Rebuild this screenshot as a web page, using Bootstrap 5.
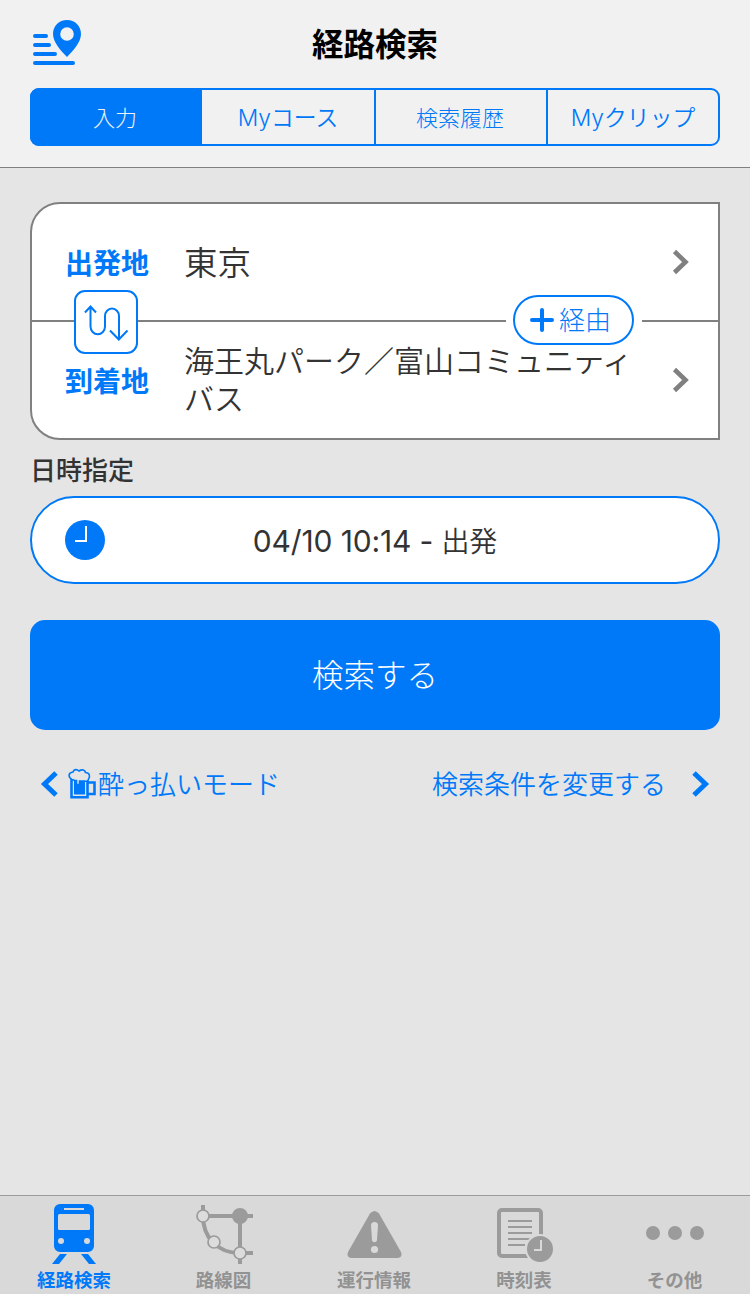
<!DOCTYPE html>
<html lang="ja">
<head>
<meta charset="utf-8">
<meta name="viewport" content="width=device-width, initial-scale=1">
<title>経路検索</title>
<link href="https://cdn.jsdelivr.net/npm/bootstrap@5.3.0/dist/css/bootstrap.min.css" rel="stylesheet">
<style>
:root{--blue:#0079f9;--line:#808080}
body{font-family:Inter,"Noto Sans CJK JP",sans-serif;font-weight:350;background:#e5e5e5;color:#333;height:1294px;overflow:hidden;line-height:1}
svg{display:block;flex:none}
.app-head{height:168px;background:#f1f1f1;border-bottom:1px solid #808080;padding:19px 30px 0}
.head-row{height:69px;grid-template-columns:60px 1fr 60px}
.head-row h1{font-size:31.5px;font-weight:700;color:#000;line-height:52px}
.seg{height:58px;border:2px solid var(--blue);border-radius:9px;grid-template:54px/170px 172px 172px 172px}
.seg .btn{border-radius:0;border:0;color:var(--blue);font-size:22px;font-weight:300;padding:1px 2px 0 0;line-height:52px}
.seg .btn+.btn{border-left:2px solid var(--blue)}
.seg .btn.active{margin:-2px 0 -2px -2px;padding-top:1px;border-radius:9px 0 0 9px;background:var(--blue);color:#f1f1f1}
.seg .btn.active+.btn{border-left:0}
.seg .my{font-size:22.8px;font-weight:350;padding:1px 0 0}
.places{margin-top:34px;height:238px;background:#fff;border:2px solid var(--line);border-radius:30px 0 0 30px}
.place{height:116px;padding-left:33px;padding-right:28px}
.place+.place{height:118px;border-top:2px solid var(--line)}
.place-label{width:119px;font-size:28px;font-weight:700;color:var(--blue);padding-top:3px}
.from{font-size:33.5px;padding-top:3px}
.to{font-size:30px;line-height:38px}
.swap{left:42px;top:86px;width:64px;height:64px;border:2px solid var(--blue);border-radius:11px;background:#fff}
.via-wrap{left:474px;top:84px;width:136px;height:64px;background:#fff}
.via{width:121px;height:50px;margin:7px 7px;border:2px solid var(--blue);border-radius:25px;color:var(--blue);font-size:26px;font-weight:300;padding:0 0 0 15px;gap:5px}
.via span{padding-top:2px}
.when-title{font-size:26px;font-weight:500;line-height:32px;margin-top:15px;margin-bottom:9px}
.when{height:88px;border:2px solid var(--blue);border-radius:44px;background:#fff;font-size:30px;padding-left:33px}
.when span{left:0;right:0;top:28px;text-align:center;font-weight:400;letter-spacing:-.15px}
.when b{font-size:28px;font-weight:350}
.go{height:110px;margin-top:36px;border-radius:15px;background:var(--blue)!important;border:0;color:#fff;font-size:31.5px;font-weight:300;padding-top:8px}
.links{margin-top:36px;height:36px;padding:0 10px;color:var(--blue);font-size:26px;font-weight:350}
.links span{padding-top:2px}
.tabs{height:99px;border-top:1px solid #9b9b9b;background:#d9d9d9;color:#929292;font-size:18.5px;font-weight:700;grid-template-columns:148px 151px 150px 150px 151px}
.tab{padding-top:6px}
.tab svg{margin-bottom:5px}
.tab.on{color:var(--blue)}
</style>
</head>
<body class="d-flex flex-column">
<header class="app-head">
  <div class="head-row d-grid">
    <svg width="52" height="50" viewBox="30 19 52 50" fill="#0079f9"><g stroke="#0079f9" stroke-width="4" stroke-linecap="round"><path d="M35 36H46M35 45H49M35 54H55M35 63H73"/></g><path fill-rule="evenodd" d="M67 20c-8 0-14 6-14 14 0 8 8 17 14 23 6-6 14-15 14-23 0-8-6-14-14-14Zm0 7.2a6.8 6.8 0 1 1 0 13.6 6.8 6.8 0 0 1 0-13.6Z"/></svg>
    <h1 class="text-center m-0">経路検索</h1>
  </div>
  <nav class="seg d-grid">
    <button class="btn active">入力</button>
    <button class="btn my">Myコース</button>
    <button class="btn">検索履歴</button>
    <button class="btn my">Myクリップ</button>
  </nav>
</header>
<main class="flex-grow-1" style="padding:0 30px">
  <section class="places position-relative">
    <div class="place d-flex align-items-center">
      <span class="place-label">出発地</span><span class="from flex-grow-1">東京</span>
      <svg width="18" height="26" viewBox="0 0 18 26" fill="none" stroke="#808080" stroke-width="4.6"><path d="M2.5 2.5 13.5 13 2.5 23.5"/></svg>
    </div>
    <div class="place d-flex align-items-center">
      <span class="place-label">到着地</span><span class="to flex-grow-1">海王丸パーク／富山コミュニティ<br>バス</span>
      <svg width="18" height="26" viewBox="0 0 18 26" fill="none" stroke="#808080" stroke-width="4.6"><path d="M2.5 2.5 13.5 13 2.5 23.5"/></svg>
    </div>
    <button class="swap position-absolute p-0" aria-label="入れ替え"><svg width="60" height="60" viewBox="76 292 60 60" fill="none" stroke="#0079f9" stroke-width="2"><path d="M90.5 306V326.500a7 7.500 0 0 0 14.500 0V316a7 7.500 0 0 1 14 0V339M85 312.500 90.500 306.500 96 312.500M110 330.500 118.800 339.500 127.500 330.500"/></svg></button>
    <div class="via-wrap position-absolute"><button class="via bg-white d-flex align-items-center"><svg width="24" height="24" viewBox="0 0 24 24" stroke="#0079f9" stroke-width="4" stroke-linecap="round"><path d="M2 12H22M12 2V22"/></svg><span>経由</span></button></div>
  </section>
  <h2 class="when-title">日時指定</h2>
  <div class="when d-flex align-items-center position-relative">
    <svg width="40" height="40" viewBox="0 0 40 40"><circle cx="20" cy="20" r="20" fill="#0079f9"/><path d="M21 6V21H10" fill="none" stroke="#fff" stroke-width="2"/></svg>
    <span class="position-absolute">04/10 10:14 - <b>出発</b></span>
  </div>
  <button class="btn go w-100 d-block">検索する</button>
  <div class="links d-flex justify-content-between align-items-center">
    <div class="d-flex align-items-center">
      <svg width="18" height="26" viewBox="0 0 18 26" fill="none" stroke="#0079f9" stroke-width="5" style="margin-right:10px"><path d="M16 2 4.500 13 16 24"/></svg>
      <svg width="30" height="32" viewBox="68 768 30 32" fill="none" stroke="#0079f9" stroke-width="1.600"><path stroke-width="2.600" d="M71.500 779V797.300H87.500V781M87.500 782.500H94.500V794H87.500"/><path d="M74 781h2.500v4H80v-4H85V794.500H74Z" fill="#0079f9" stroke="none"/><path fill="#e5e5e5" d="M72 779.500c-4-2-4-7 1-7.500 1-3 4-3 6-1 3-2 6-1 6.500 1.500 4 0 5 4 3 6.500 0 2-2 2.500-4 2H79.500v3.500h-3V780.500H75Z"/></svg>
      <span>酔っ払いモード</span>
    </div>
    <div class="d-flex align-items-center"><span style="margin-right:26px">検索条件を変更する</span>
      <svg width="18" height="26" viewBox="0 0 18 26" fill="none" stroke="#0079f9" stroke-width="5"><path d="M2 2 13.500 13 2 24"/></svg>
    </div>
  </div>
</main>
<footer class="tabs d-grid">
  <div class="tab on d-flex flex-column align-items-center"><svg width="60" height="64" viewBox="44 1202 60 64" fill="#0079f9"><path d="M60 1204H88a6 6 0 0 1 6 6V1246a6 6 0 0 1-6 6H60a6 6 0 0 1-6-6V1210a6 6 0 0 1 6-6ZM60 1254H67L59 1264H52ZM81 1254H88L96 1264H89Z"/><g fill="#d9d9d9"><path d="M64 1208H84V1210H64Z"/><rect x="58" y="1214" width="32" height="16" rx="1.500"/><circle cx="61" cy="1241" r="3"/><circle cx="87" cy="1241" r="3"/></g></svg>経路検索</div>
  <div class="tab d-flex flex-column align-items-center"><svg width="60" height="64" viewBox="194 1202 60 64" fill="none" stroke="#9b9b9b" stroke-width="4"><path d="M203 1205V1216C203 1236 216 1253 240 1253H253M203 1216H253M240 1216V1264"/><circle cx="240" cy="1216" r="6" fill="#9b9b9b"/><g stroke-width="1.700" fill="#dcdcdc"><circle cx="203" cy="1216" r="6"/><circle cx="214" cy="1242" r="6"/><circle cx="240" cy="1253" r="6"/></g></svg>路線図</div>
  <div class="tab d-flex flex-column align-items-center"><svg width="60" height="64" viewBox="344 1202 60 64" fill="#9b9b9b"><path d="M370 1213.500Q374.500 1208.500 379 1213.500L401 1252Q403 1257 398 1258H351Q346 1257 348 1252Z"/><path fill="#d9d9d9" d="M371 1225C371 1221 378 1221 378 1225L377 1240C376.500 1243 372.500 1243 372 1240Z"/><circle cx="374.500" cy="1249.500" r="3.600" fill="#d9d9d9"/></svg>運行情報</div>
  <div class="tab d-flex flex-column align-items-center"><svg width="60" height="64" viewBox="494 1202 60 64" fill="none" stroke="#9b9b9b"><rect x="499" y="1210" width="42" height="46" rx="3" stroke-width="4"/><path stroke-width="2" d="M508 1221H532M508 1227H532M508 1233H532M508 1239H532M508 1245H525"/><circle cx="540" cy="1249" r="14" fill="#9b9b9b" stroke="#d9d9d9" stroke-width="2"/><path stroke="#d9d9d9" stroke-width="2" d="M541 1240V1250H534"/></svg>時刻表</div>
  <div class="tab d-flex flex-column align-items-center"><svg width="60" height="64" viewBox="645 1202 60 64" fill="#9b9b9b"><circle cx="653" cy="1233" r="7"/><circle cx="675" cy="1233" r="7"/><circle cx="697" cy="1233" r="7"/></svg>その他</div>
</footer>
<script src="https://cdn.jsdelivr.net/npm/bootstrap@5.3.0/dist/js/bootstrap.bundle.min.js"></script>
</body>
</html>
